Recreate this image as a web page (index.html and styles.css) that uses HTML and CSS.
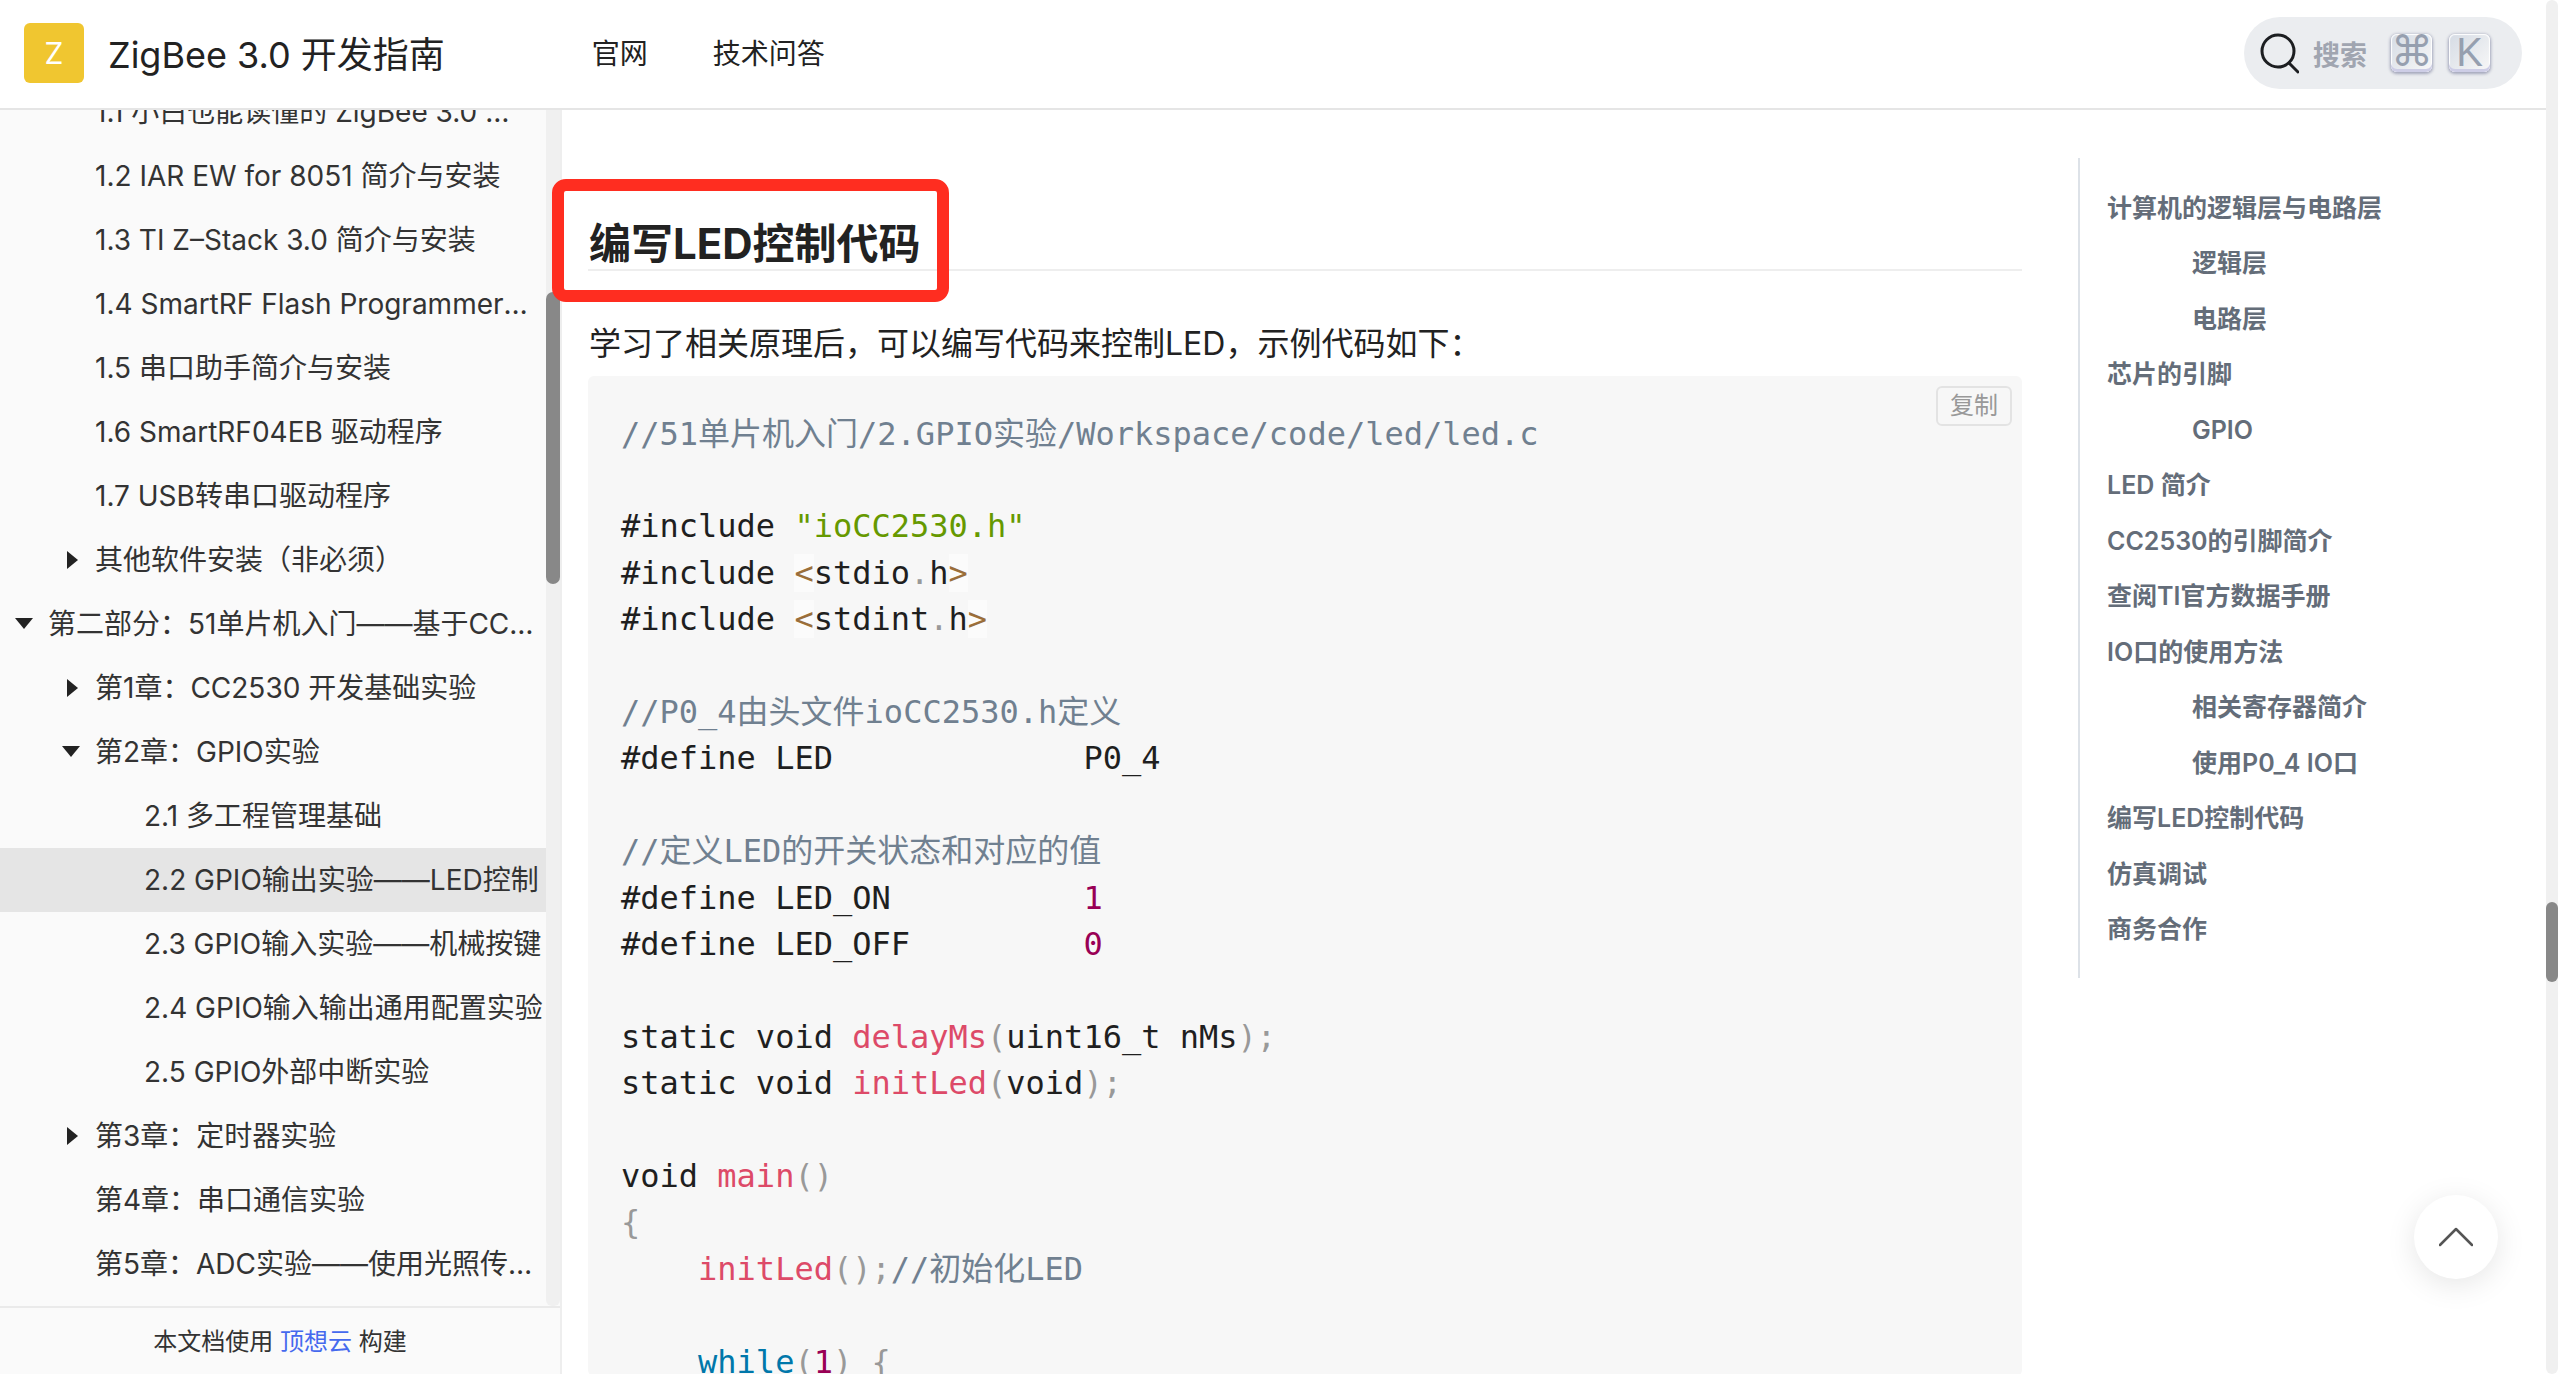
FILE: index.html
```html
<!DOCTYPE html>
<html lang="zh-CN">
<head>
<meta charset="utf-8">
<title>ZigBee 3.0 开发指南</title>
<link rel="stylesheet" href="styles.css">
</head>
<body>
<div class="app">
  <div class="page">
    <header class="topbar">
      <div class="logo">Z</div>
      <div class="site-title">ZigBee 3.0 开发指南</div>
      <nav class="topnav"><a>官网</a><a>技术问答</a></nav>
      <div class="search">
        <svg class="search-icon" width="40" height="44" viewBox="0 0 40 44"><circle cx="19" cy="20" r="16" fill="none" stroke="#1c1e21" stroke-width="3"/><path d="M30 32 L39 41" fill="none" stroke="#1c1e21" stroke-width="3" stroke-linecap="round"/></svg>
        <span class="search-text">搜索</span>
        <kbd class="key key-cmd">⌘</kbd>
        <kbd class="key">K</kbd>
      </div>
    </header>
    <div class="layout">
      <aside class="sidebar">
        <div class="side-scroll">
          <ul class="tree">
            <li class="row lv1">1.1 小白也能读懂的 ZigBee 3.0 入门教程</li>
            <li class="row lv1">1.2 IAR EW for 8051 简介与安装</li>
            <li class="row lv1">1.3 TI Z–Stack 3.0 简介与安装</li>
            <li class="row lv1">1.4 SmartRF Flash Programmer 简介与安装</li>
            <li class="row lv1">1.5 串口助手简介与安装</li>
            <li class="row lv1">1.6 SmartRF04EB 驱动程序</li>
            <li class="row lv1">1.7 USB转串口驱动程序</li>
            <li class="row lv1 has-arrow"><svg class="arrow arrow-r" width="11" height="18" viewBox="0 0 11 18"><path d="M0 0 L11 9 L0 18Z" fill="#222"/></svg>其他软件安装（非必须）</li>
            <li class="row lv0 has-arrow"><svg class="arrow arrow-d" width="18" height="11" viewBox="0 0 18 11"><path d="M0 0 L18 0 L9 11Z" fill="#222"/></svg>第二部分：51单片机入门——基于CC2530的实验教程</li>
            <li class="row lv1 has-arrow"><svg class="arrow arrow-r" width="11" height="18" viewBox="0 0 11 18"><path d="M0 0 L11 9 L0 18Z" fill="#222"/></svg>第1章：CC2530 开发基础实验</li>
            <li class="row lv1 has-arrow"><svg class="arrow arrow-d" width="18" height="11" viewBox="0 0 18 11"><path d="M0 0 L18 0 L9 11Z" fill="#222"/></svg>第2章：GPIO实验</li>
            <li class="row lv2">2.1 多工程管理基础</li>
            <li class="row lv2 active">2.2 GPIO输出实验——LED控制</li>
            <li class="row lv2">2.3 GPIO输入实验——机械按键</li>
            <li class="row lv2">2.4 GPIO输入输出通用配置实验</li>
            <li class="row lv2">2.5 GPIO外部中断实验</li>
            <li class="row lv1 has-arrow"><svg class="arrow arrow-r" width="11" height="18" viewBox="0 0 11 18"><path d="M0 0 L11 9 L0 18Z" fill="#222"/></svg>第3章：定时器实验</li>
            <li class="row lv1">第4章：串口通信实验</li>
            <li class="row lv1">第5章：ADC实验——使用光照传感器测量光强</li>
          </ul>
          <div class="side-track"><div class="side-thumb"></div></div>
        </div>
        <div class="side-foot">本文档使用 <a>顶想云</a> 构建</div>
      </aside>
      <main class="content">
        <h2 class="heading">编写LED控制代码</h2>
        <p class="para">学习了相关原理后，可以编写代码来控制LED，示例代码如下：</p>
        <div class="code-box">
          <button class="copy">复制</button>
<pre class="code"><span class="c">//51单片机入门/2.GPIO实验/Workspace/code/led/led.c</span>

#include <span class="s">"ioCC2530.h"</span>
#include <span class="o">&lt;</span>stdio<span class="p">.</span>h<span class="o">&gt;</span>
#include <span class="o">&lt;</span>stdint<span class="p">.</span>h<span class="o">&gt;</span>

<span class="c">//P0_4由头文件ioCC2530.h定义</span>
#define LED             P0_4

<span class="c">//定义LED的开关状态和对应的值</span>
#define LED_ON          <span class="n">1</span>
#define LED_OFF         <span class="n">0</span>

static void <span class="f">delayMs</span><span class="p">(</span>uint16_t nMs<span class="p">);</span>
static void <span class="f">initLed</span><span class="p">(</span>void<span class="p">);</span>

void <span class="f">main</span><span class="p">()</span>
<span class="p">{</span>
    <span class="f">initLed</span><span class="p">();</span><span class="c">//初始化LED</span>

    <span class="k">while</span><span class="p">(</span><span class="n">1</span><span class="p">)</span> <span class="p">{</span></pre>
        </div>
      </main>
      <aside class="toc">
        <ul class="toc-list">
          <li>计算机的逻辑层与电路层</li>
          <li class="sub">逻辑层</li>
          <li class="sub">电路层</li>
          <li>芯片的引脚</li>
          <li class="sub">GPIO</li>
          <li>LED 简介</li>
          <li>CC2530的引脚简介</li>
          <li>查阅TI官方数据手册</li>
          <li>IO口的使用方法</li>
          <li class="sub">相关寄存器简介</li>
          <li class="sub">使用P0_4 IO口</li>
          <li>编写LED控制代码</li>
          <li>仿真调试</li>
          <li>商务合作</li>
        </ul>
      </aside>
    </div>
  </div>
  <div class="page-track"><div class="page-thumb"></div></div>
</div>
<div class="mark"></div>
<div class="to-top"><svg width="34" height="20" viewBox="0 0 34 20"><path d="M1 18 L17 2 L33 18" fill="none" stroke="#555" stroke-width="2.5" stroke-linecap="round" stroke-linejoin="round"/></svg></div>
</body>
</html>
```
FILE: styles.css
```css
* { box-sizing: border-box; }
html, body { margin: 0; height: 100%; overflow: hidden; background: #fff; }
body { font-family: Inter, "Noto Sans CJK SC", sans-serif; color: #222; }
ul { list-style: none; margin: 0; padding: 0; }

.app { display: flex; height: 1374px; }
.page { flex: 1; min-width: 0; display: flex; flex-direction: column; }

.page-track { width: 12px; background: #f0f0f0; border-radius: 6px; padding-top: 902px; }
.page-thumb { height: 80px; background: #888; border-radius: 6px; }

.topbar { height: 110px; flex: none; display: flex; align-items: center; padding: 0 24px 4px; border-bottom: 2px solid #e5e5e5; background: #fff; }
.logo { width: 60px; height: 60px; margin-top: 2px; background: #f0c630; border-radius: 6px; color: #fff; font-size: 30px; display: flex; align-items: center; justify-content: center; }
.site-title { margin-left: 24px; font-size: 36px; color: #222; }
.topnav { margin-left: 147px; display: flex; gap: 65px; font-size: 28px; color: #222; }
.search { margin-left: auto; margin-top: 2px; width: 278px; height: 72px; border-radius: 36px; background: #ebedf0; display: flex; align-items: center; padding-left: 15px; }
.search-icon { flex: none; }
.search-text { margin-left: 14px; font-size: 27px; font-weight: 700; color: #a0a5b0; width: 78px; }
.key { width: 41px; height: 38px; margin-right: 17px; border-radius: 6px; background: linear-gradient(-225deg, #d5dbe4, #f8f8f8); box-shadow: inset 0 -3px 0 0 #cdcde6, inset 0 0 1px 1px #fff, 0 1px 3px 1px rgba(30, 35, 90, .35); color: #969faf; font-family: "Liberation Sans", sans-serif; font-size: 40px; line-height: 36px; text-align: center; display: block; }
.key-cmd { font-family: "DejaVu Sans", sans-serif; font-size: 42px; overflow: hidden; }

.layout { flex: 1; min-height: 0; display: flex; }

.sidebar { width: 562px; flex: none; background: #fafafa; border-right: 2px solid #eee; display: flex; flex-direction: column; }
.side-scroll { flex: 1; min-height: 0; display: flex; overflow: hidden; border-bottom: 2px solid #eaeaea; }
.tree { flex: 1; min-width: 0; margin-top: -30px; font-size: 28px; color: #333; }
.row { height: 64px; line-height: 65px; white-space: nowrap; overflow: hidden; text-overflow: ellipsis; padding-right: 11px; }
.lv0 { padding-left: 48px; }
.lv1 { padding-left: 95px; }
.lv2 { padding-left: 144px; padding-right: 0; }
.has-arrow { position: relative; }
.arrow { position: absolute; }
.arrow-r { top: 23px; margin-left: -28px; }
.arrow-d { top: 26px; margin-left: -33px; }
.active { background: #e5e5e5; text-overflow: clip; }
.side-track { width: 14px; flex: none; background: #f0f0f0; border-radius: 0 0 6px 6px; padding-top: 182px; }
.side-thumb { height: 292px; background: #888; border-radius: 7px; }
.side-foot { height: 66px; flex: none; font-size: 24px; line-height: 68px; text-align: center; color: #333; }
.side-foot a { color: #4569ee; }

.content { width: 1460px; flex: none; padding-left: 26px; overflow: hidden; }
.heading { margin: 0; height: 161px; padding-top: 111px; border-bottom: 2px solid #eee; font-size: 42px; line-height: 46px; font-weight: 700; color: #222; padding-left: 1px; }
.para { margin: 0; height: 105px; padding-top: 50px; padding-left: 1px; font-size: 32px; line-height: 46px; color: #222; }
.code-box { position: relative; height: 1000px; background: #f7f7f7; border-radius: 6px; padding: 34.5px 33px 0; }
.copy { position: absolute; top: 10px; right: 10px; width: 76px; height: 40px; padding: 0; border: 2px solid #e3e3e3; border-radius: 6px; background: #f7f7f7; color: #999; font-family: inherit; font-size: 24px; line-height: 34px; }
.code { margin: 0; font-family: "DejaVu Sans Mono", "Noto Sans CJK SC", monospace; font-size: 32px; line-height: 46.4px; color: #1f1f1f; }
.c { color: #708090; }
.s { color: #669900; }
.n { color: #990055; }
.f { color: #dd4a68; }
.k { color: #0077aa; }
.p { color: #999; }
.o { color: #9a6e3a; background: rgba(255, 255, 255, .5); }

.toc { flex: 1; min-width: 0; padding: 48px 0 0 56px; }
.toc-list { height: 820px; border-left: 2px solid #dde2e8; padding: 22.5px 0 0 27px; font-size: 25px; font-weight: 600; color: #646d79; }
.toc-list li { height: 55.5px; line-height: 55.5px; white-space: nowrap; }
.toc-list .sub { padding-left: 85px; }

.mark { position: absolute; left: 552px; top: 179px; width: 397px; height: 123px; border: 12px solid #ff2d20; border-radius: 14px; }
.to-top { position: absolute; left: 2414px; top: 1195px; width: 84px; height: 84px; border-radius: 50%; background: #fff; box-shadow: 0 6px 30px rgba(0, 0, 0, .1); display: flex; align-items: center; justify-content: center; }
```
